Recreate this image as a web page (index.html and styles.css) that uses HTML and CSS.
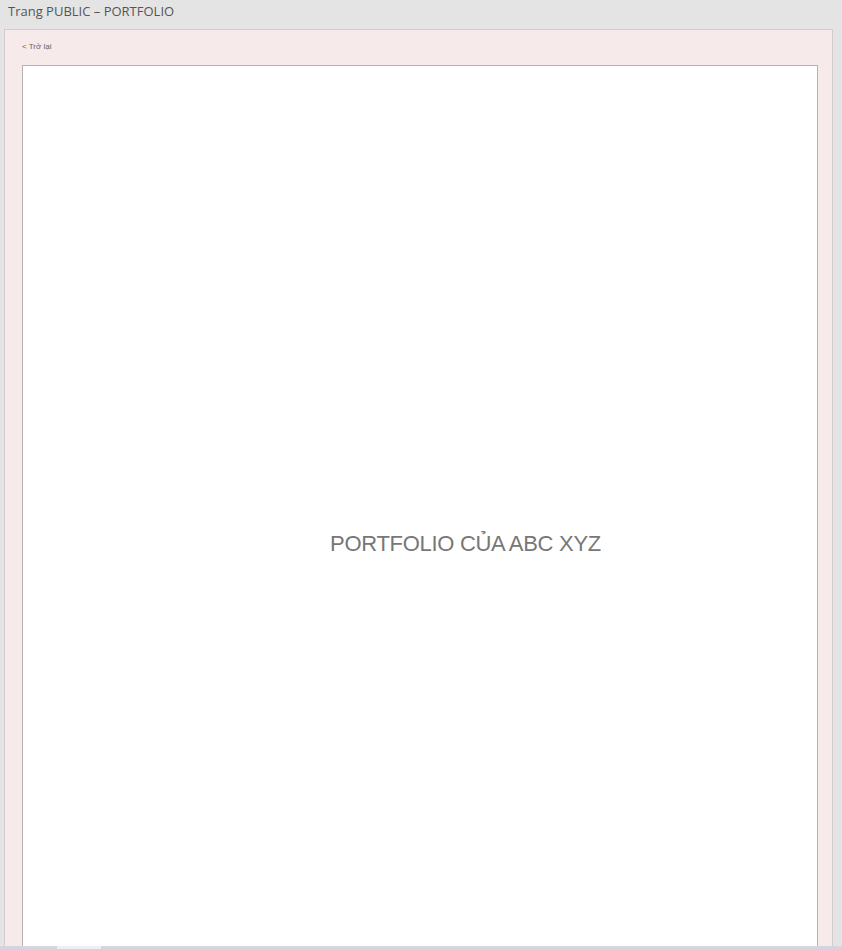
FILE: index.html
```html
<!DOCTYPE html>
<html lang="vi">
<head>
<meta charset="utf-8">
<title>Trang PUBLIC – PORTFOLIO</title>
<link rel="stylesheet" href="styles.css">
</head>
<body>
<div class="page">
  <header class="title">Trang PUBLIC – PORTFOLIO</header>
  <main class="panel">
    <a class="back" href="#">&lt; Trở lại</a>
    <section class="canvas">
      <h1 class="heading">PORTFOLIO CỦA ABC XYZ</h1>
    </section>
  </main>
  <div class="scrollbar"><div class="thumb"></div></div>
</div>
</body>
</html>
```
FILE: styles.css
```css
html, body {
  margin: 0;
  padding: 0;
  height: 100%;
  overflow: hidden;
}
body {
  background: #e4e4e4;
  font-family: "Open Sans", "Noto Sans", sans-serif;
}
.page {
  height: 949px;
  display: flex;
  flex-direction: column;
}
.title {
  height: 29px;
  box-sizing: border-box;
  padding: 1px 0 0 8px;
  font-size: 13px;
  line-height: 20px;
  color: #555555;
  flex: none;
}
.panel {
  flex: 1;
  min-height: 0;
  margin-left: 4px;
  width: 829px;
  box-sizing: border-box;
  background: #f7eaea;
  border: 1px solid #d2cccc;
  border-bottom: none;
  padding: 11px 14px 0 17px;
  display: flex;
  flex-direction: column;
}
.back {
  font-family: "Liberation Sans", Arial, sans-serif;
  font-size: 8px;
  line-height: 12px;
  color: #666666;
  text-decoration: none;
  height: 24px;
  flex: none;
}
.canvas {
  flex: 1;
  background: #ffffff;
  border: 1px solid #b8b2b2;
  border-bottom: none;
  display: flex;
  align-items: center;
  justify-content: center;
  padding: 76px 0 0 91px;
}
.heading {
  margin: 0;
  font-family: "Liberation Sans", Arial, sans-serif;
  font-weight: normal;
  font-size: 22px;
  color: #777777;
  letter-spacing: -0.3px;
}
.scrollbar {
  height: 3px;
  background: #d6d4df;
  flex: none;
  padding-left: 57px;
}
.thumb {
  width: 44px;
  height: 3px;
  background: #efeef5;
}
```
